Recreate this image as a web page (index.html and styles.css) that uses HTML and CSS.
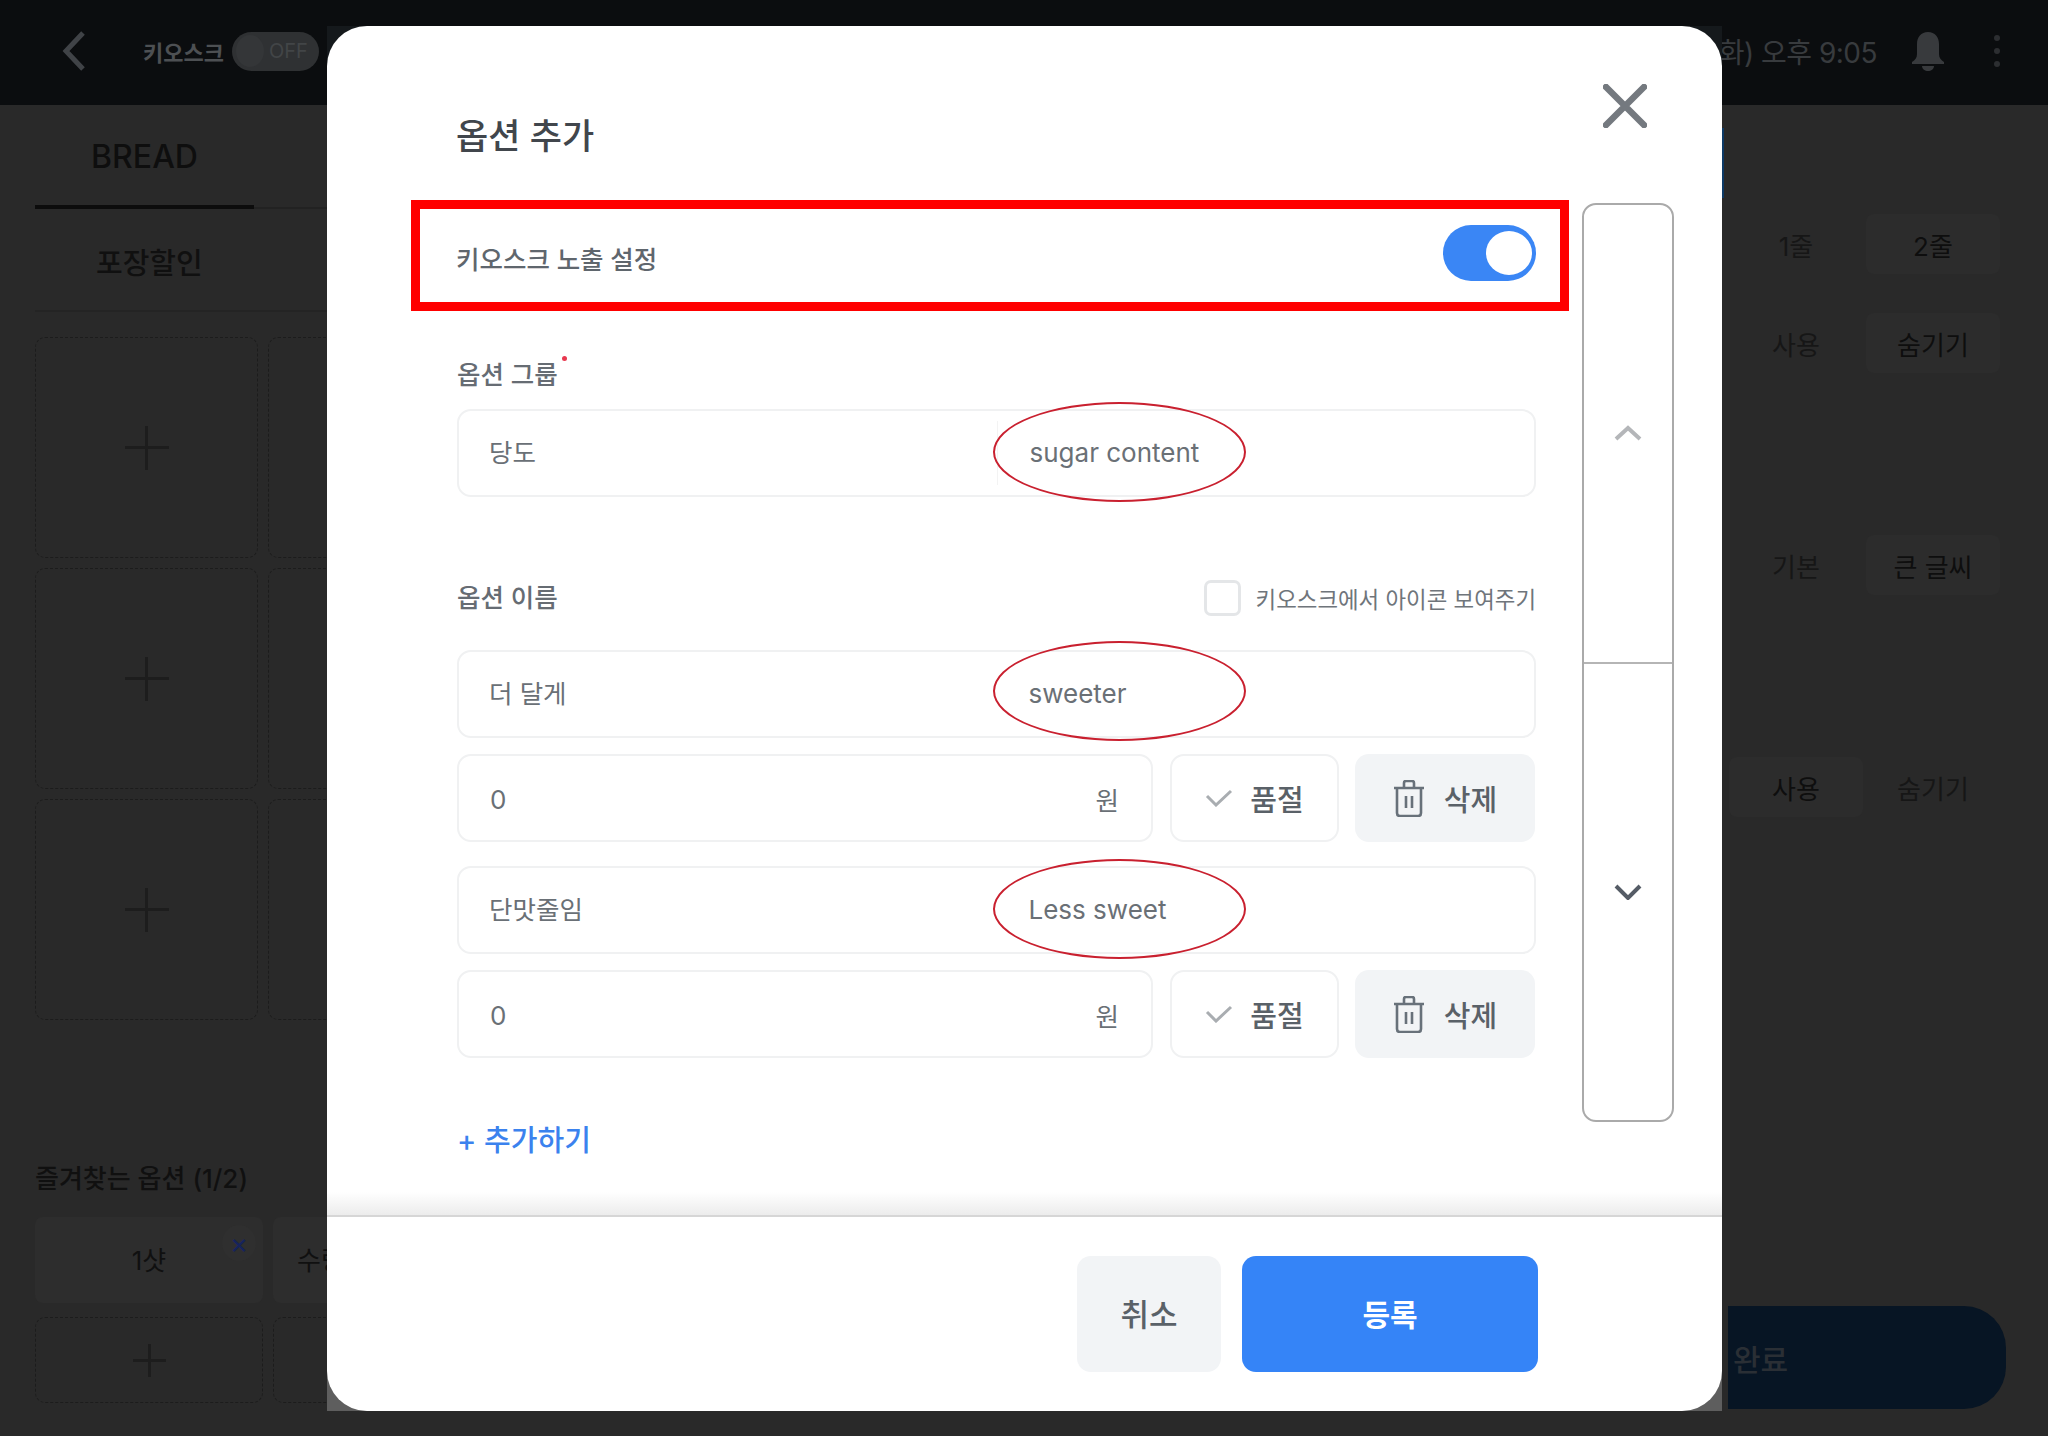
FILE: index.html
```html
<!DOCTYPE html>
<html lang="ko">
<head>
  <meta charset="UTF-8" />
  <title>옵션 추가</title>
  <link rel="stylesheet" href="styles.css">
</head>
<body>

  <header class="topbar">
    <svg class="back" width="24" height="42" viewBox="0 0 24 42"><path d="M21 3 4 21l17 18" /></svg>
    <span class="kiosk-name">키오스크</span>
    <div class="kiosk-toggle"><i></i><span>OFF</span></div>
    <span class="clock">(화) 오후 9:05</span>
    <svg class="bell" width="36" height="40" viewBox="0 0 36 40">
      <path d="M18 1c-7 0-11 5-11 12v10c0 4-2 6-5 8v2h32v-2c-3-2-5-4-5-8V13C29 6 25 1 18 1z" />
      <path d="M12 35h12c0 3-3 5-6 5s-6-2-6-5z" />
    </svg>
    <div class="dots"><i></i><i></i><i></i></div>
  </header>

  <div class="page">
    <section class="left">
      <div class="tabs"><div class="tab">BREAD</div></div>
      <div class="subtab">포장할인</div>
      <div class="slots">
        <div class="slot"></div><div class="slot"></div><div class="slot"></div>
        <div class="slot"></div><div class="slot"></div><div class="slot"></div>
        <div class="slot"></div><div class="slot"></div><div class="slot"></div>
      </div>
      <h3 class="fav-title">즐겨찾는 옵션 (1/2)</h3>
      <div class="fav-grid">
        <div class="fav">1샷<span class="fav-x">×</span></div>
        <div class="fav">수량</div>
        <div class="slot"></div>
        <div class="slot"></div>
      </div>
    </section>

    <section class="right">
      <div class="pair first"><div class="pair-item">1줄</div><div class="pair-item on">2줄</div></div>
      <div class="pair"><div class="pair-item">사용</div><div class="pair-item on">숨기기</div></div>
      <div class="pair wide"><div class="pair-item">기본</div><div class="pair-item on">큰 글씨</div></div>
      <div class="pair wide"><div class="pair-item on">사용</div><div class="pair-item">숨기기</div></div>
      <div class="done">완료</div>
    </section>
  </div>

  <!-- Modal -->
  <div class="modal-back">
    <div class="modal">
      <div class="modal-head">
        <h2>옵션 추가</h2>
        <svg class="close" width="44" height="44" viewBox="0 0 44 44"><path d="M3 3l38 38M41 3 3 41" /></svg>
      </div>

      <div class="modal-main">
        <div class="form">
          <div class="expose">
            <span>키오스크 노출 설정</span>
            <div class="switch"><i></i></div>
          </div>

          <div class="fields">
            <label class="label group-label">옵션 그룹<b></b></label>
            <div class="field">
              <div class="half">당도</div>
              <div class="half en divided">sugar content</div>
              <div class="note"></div>
            </div>

            <div class="name-head">
              <label class="label">옵션 이름</label>
              <div class="icon-check"><i></i>키오스크에서 아이콘 보여주기</div>
            </div>

            <div class="option">
              <div class="field">
                <div class="half">더 달게</div>
                <div class="half en">sweeter</div>
                <div class="note"></div>
              </div>
              <div class="price-row">
                <div class="price"><span class="num">0</span><span class="won">원</span></div>
                <div class="btn-soldout">
                  <svg width="28" height="18" viewBox="0 0 28 18"><path d="M2 7l9 9L26 2" /></svg>품절
                </div>
                <div class="btn-delete">
                  <svg width="32" height="37" viewBox="0 0 32 37"><path d="M1 8h30M11 8V3q0-2 2-2h6q2 0 2 2v5M4 8v25q0 3 3 3h18q3 0 3-3V8M13 16v12M19 16v12" /></svg>삭제
                </div>
              </div>
            </div>

            <div class="option">
              <div class="field">
                <div class="half">단맛줄임</div>
                <div class="half en">Less sweet</div>
                <div class="note"></div>
              </div>
              <div class="price-row">
                <div class="price"><span class="num">0</span><span class="won">원</span></div>
                <div class="btn-soldout">
                  <svg width="28" height="18" viewBox="0 0 28 18"><path d="M2 7l9 9L26 2" /></svg>품절
                </div>
                <div class="btn-delete">
                  <svg width="32" height="37" viewBox="0 0 32 37"><path d="M1 8h30M11 8V3q0-2 2-2h6q2 0 2 2v5M4 8v25q0 3 3 3h18q3 0 3-3V8M13 16v12M19 16v12" /></svg>삭제
                </div>
              </div>
            </div>

            <div class="add-more">+ 추가하기</div>
          </div>
        </div>

        <div class="scroller">
          <div class="scroll-half">
            <svg class="up" width="28" height="16" viewBox="0 0 28 16"><path d="M2 14 14 3l12 11" /></svg>
          </div>
          <div class="scroll-half">
            <svg class="down" width="28" height="16" viewBox="0 0 28 16"><path d="M2 2l12 12L26 2" /></svg>
          </div>
        </div>
      </div>

      <div class="foot-shade"></div>
      <div class="modal-foot">
        <div class="btn-cancel">취소</div>
        <div class="btn-submit">등록</div>
      </div>
    </div>
  </div>

</body>
</html>
```

FILE: styles.css
```css
* {
  margin: 0; padding: 0; box-sizing: border-box;
  font-family: Inter, 'Noto Sans CJK KR', sans-serif;
}

body {
  width: 2048px;
  height: 1436px;
  position: relative;
  overflow: hidden;
  background-color: #292929;
}

/* top bar behind the modal */
.topbar {
  height: 105px;
  background-color: #0b0d0f;
  display: flex;
  align-items: center;
  padding: 0 48px 3px 62px;
  color: #45484b;
}

.back path {
  fill: none;
  stroke: #404347;
  stroke-width: 5;
}

.kiosk-name {
  margin-left: 57px;
  font-size: 22px;
  font-weight: 700;
  color: #4d5053;
}

.kiosk-toggle {
  margin-left: 8px;
  width: 87px;
  height: 39px;
  border-radius: 20px;
  background-color: #2f3133;
  display: flex;
  align-items: center;
  gap: 5px;
  padding-left: 4px;
  font-size: 20px;
  color: #424547;
}

.kiosk-toggle i {
  width: 28px;
  height: 32px;
  border-radius: 50%;
  background-color: #343638;
}

.clock {
  margin-left: auto;
  font-size: 28px;
  letter-spacing: -0.5px;
  color: #383b3e;
}

.bell {
  margin-left: 33px;
  fill: #383a3d;
}

.dots {
  margin-left: 48px;
  display: flex;
  flex-direction: column;
  gap: 7px;
}

.dots i {
  width: 6px;
  height: 6px;
  border-radius: 50%;
  background-color: #2c2e31;
}

/* page behind the modal */
.page {
  display: flex;
  justify-content: space-between;
}

.left {
  width: 640px;
  padding-left: 35px;
}

.tabs {
  height: 104px;
  border-bottom: 2px solid #222;
}

.tab {
  width: 219px;
  height: 104px;
  padding-top: 3px;
  border-bottom: 4px solid #0c0c0c;
  display: flex;
  align-items: center;
  justify-content: center;
  font-size: 32px;
  font-weight: 500;
  color: #0e0e0e;
}

.subtab {
  height: 103px;
  padding: 2px 0 0 61px;
  border-bottom: 2px solid #242424;
  display: flex;
  align-items: center;
  font-size: 29px;
  font-weight: 500;
  color: #101010;
}

.slots {
  margin-top: 25px;
  display: grid;
  grid-template-columns: 223px 223px 223px;
  grid-auto-rows: 221px;
  gap: 10px;
}

/* empty slot with a thin plus in the middle */
.slot {
  border: 1.5px dashed #1c1c1c;
  border-radius: 10px;
  background: linear-gradient(#1d1d1d, #1d1d1d) center / 44px 3px no-repeat,
    linear-gradient(#1d1d1d, #1d1d1d) center / 3px 44px no-repeat;
}

.fav-grid .slot {
  background-size: 33px 3px, 3px 33px;
}

.fav-title {
  margin-top: 139px;
  font-size: 26px;
  font-weight: 500;
  line-height: 40px;
  color: #101010;
}

.fav-grid {
  margin-top: 18px;
  display: grid;
  grid-template-columns: 228px 228px;
  grid-auto-rows: 86px;
  gap: 14px 10px;
}

.fav {
  position: relative;
  background-color: #2d2d2d;
  border-radius: 8px;
  padding-bottom: 3px;
  display: flex;
  align-items: center;
  justify-content: center;
  font-size: 26px;
  color: #101010;
}

.fav + .fav {
  justify-content: flex-start;
  padding-left: 24px;
}

.fav-x {
  position: absolute;
  top: 8px;
  right: 7px;
  width: 34px;
  height: 36px;
  border-radius: 50%;
  background-color: #2f2f2f;
  display: flex;
  align-items: center;
  justify-content: center;
  font-size: 28px;
  color: #16235c;
}

.right {
  width: 320px;
  padding-right: 42px;
}

.pair {
  width: 271px;
  margin: 39px 0 0 1px;
  display: grid;
  grid-template-columns: 134px 134px;
  gap: 3px;
}

.pair.first {
  margin-top: 109px;
}

.pair.wide {
  margin-top: 162px;
}

.pair-item {
  height: 60px;
  border-radius: 8px;
  display: flex;
  align-items: center;
  justify-content: center;
  font-size: 26px;
  color: #161616;
}

.pair-item.on {
  background-color: #2c2c2c;
  color: #0e0e0e;
}

.done {
  margin-top: 489px;
  height: 103px;
  border-radius: 0 42px 42px 0;
  background-color: #071524;
  color: #2a2f35;
  font-size: 30px;
  font-weight: 500;
  display: flex;
  align-items: center;
  padding-left: 5px;
}

/* Modal */
.modal-back {
  position: absolute;
  left: 327px;
  top: 26px;
  width: 1395px;
  height: 1385px;
  background: linear-gradient(#15191c 50%, #5e5e5e 50%);
}

.modal-back::after {
  content: "";
  position: absolute;
  right: -2px;
  top: 102px;
  width: 2px;
  height: 70px;
  background-color: #0d3a66;
}

.modal {
  width: 100%;
  height: 100%;
  background-color: #fff;
  border-radius: 40px;
  overflow: hidden;
}

.modal-head {
  height: 174px;
  display: flex;
  justify-content: space-between;
  align-items: flex-start;
  padding: 58px 75px 0 129px;
}

.modal-head h2 {
  margin-top: 28px;
  font-size: 35px;
  line-height: 48px;
  font-weight: 500;
  color: #41464c;
}

.close path {
  fill: none;
  stroke: #74797f;
  stroke-width: 6.5;
  stroke-linecap: round;
}

.modal-main {
  height: 992px;
  padding-left: 84px;
  display: flex;
  gap: 13px;
}

.form {
  width: 1158px;
}

.expose {
  height: 111px;
  border: 9px solid #f00;
  padding: 0 24px 0 36px;
  display: flex;
  align-items: center;
  justify-content: space-between;
  font-size: 25.5px;
  font-weight: 500;
  color: #5f666d;
}

.expose span {
  margin-top: 3px;
}

.switch {
  margin-bottom: 5px;
  width: 93px;
  height: 56px;
  border-radius: 28px;
  background-color: #3a86f5;
  display: flex;
  align-items: center;
  justify-content: flex-end;
  padding-right: 4px;
}

.switch i {
  width: 46px;
  height: 44px;
  border-radius: 50%;
  background-color: #fff;
}

.fields {
  padding: 0 33px 0 46px;
}

.label {
  display: block;
  font-size: 25.5px;
  line-height: 34px;
  font-weight: 500;
  color: #666c73;
}

.group-label {
  position: relative;
  width: fit-content;
  margin: 47px 0 17px;
}

.group-label b {
  position: absolute;
  top: -2px;
  right: -9px;
  width: 5px;
  height: 5px;
  border-radius: 50%;
  background-color: #e8384f;
}

.field {
  position: relative;
  height: 88px;
  border: 2px solid #f0f1f2;
  border-radius: 14px;
  display: flex;
  align-items: center;
  font-size: 25.5px;
  color: #6a7076;
}

.half {
  width: 50%;
  padding-left: 30px;
  line-height: 64px;
}

.half.en {
  padding-left: 32px;
  font-size: 26px;
}

.half.divided {
  border-left: 1px solid #f3f3f3;
}

/* hand-drawn red circle over the translation */
.note {
  position: absolute;
  left: 534px;
  top: -9px;
  width: 253px;
  height: 100px;
  border: 2px solid #c9202f;
  border-radius: 50%;
}

.name-head + .option .note {
  top: -11px;
}

.name-head {
  margin-top: 83px;
  height: 36px;
  display: flex;
  align-items: center;
  justify-content: space-between;
}

.icon-check {
  display: flex;
  align-items: center;
  gap: 15px;
  font-size: 22.4px;
  color: #6f757b;
}

.icon-check i {
  width: 37px;
  height: 36px;
  border: 3px solid #e4e6e8;
  border-radius: 7px;
}

.option {
  margin-top: 24px;
}

.name-head + .option {
  margin-top: 34px;
}

.price-row {
  margin-top: 16px;
  display: flex;
  height: 88px;
}

.price {
  width: 696px;
  border: 2px solid #f0f1f2;
  border-radius: 14px;
  padding: 0 32px 0 31px;
  display: flex;
  align-items: center;
  justify-content: space-between;
  color: #6a7076;
}

.num {
  margin-top: 2px;
  font-size: 26px;
}

.won {
  font-size: 25.5px;
}

.btn-soldout {
  margin-left: 17px;
  width: 169px;
  border: 2px solid #f0f1f2;
  border-radius: 14px;
  display: flex;
  align-items: center;
  justify-content: center;
  gap: 17px;
  font-size: 29px;
  font-weight: 500;
  color: #5a6168;
}

.btn-soldout path {
  fill: none;
  stroke: #a9adb1;
  stroke-width: 3;
}

.btn-delete {
  margin-left: 16px;
  width: 180px;
  border-radius: 14px;
  background-color: #f2f4f6;
  display: flex;
  align-items: center;
  justify-content: center;
  gap: 19px;
  font-size: 29px;
  font-weight: 500;
  color: #5a6168;
}

.btn-delete path {
  fill: none;
  stroke: #68717a;
  stroke-width: 2.6;
}

.add-more {
  margin-top: 65px;
  font-size: 29px;
  line-height: 36px;
  font-weight: 500;
  color: #3b82ee;
}

.scroller {
  margin-top: 3px;
  width: 92px;
  height: 919px;
  border: 2px solid #aaa;
  border-radius: 14px;
  display: flex;
  flex-direction: column;
}

.scroll-half {
  flex: 1;
  display: flex;
  align-items: center;
  justify-content: center;
}

.scroll-half + .scroll-half {
  border-top: 2px solid #b5b5b5;
}

.scroller path {
  fill: none;
  stroke-width: 4;
}

.up path {
  stroke: #b4b6b9;
}

.down path {
  stroke: #555c66;
}

.foot-shade {
  height: 23px;
  background: linear-gradient(#fff, #ececec);
}

.modal-foot {
  border-top: 2px solid #d6d6d6;
  padding: 39px 184px 0 0;
  display: flex;
  justify-content: flex-end;
  align-items: flex-start;
  gap: 21px;
}

.btn-cancel {
  width: 144px;
  height: 116px;
  padding-bottom: 3px;
  border-radius: 14px;
  background-color: #f2f4f6;
  display: flex;
  align-items: center;
  justify-content: center;
  font-size: 31px;
  font-weight: 500;
  color: #5a6168;
}

.btn-submit {
  width: 296px;
  height: 116px;
  padding-bottom: 3px;
  border-radius: 14px;
  background-color: #3584f7;
  display: flex;
  align-items: center;
  justify-content: center;
  font-size: 30px;
  font-weight: 700;
  color: #fff;
}
```
